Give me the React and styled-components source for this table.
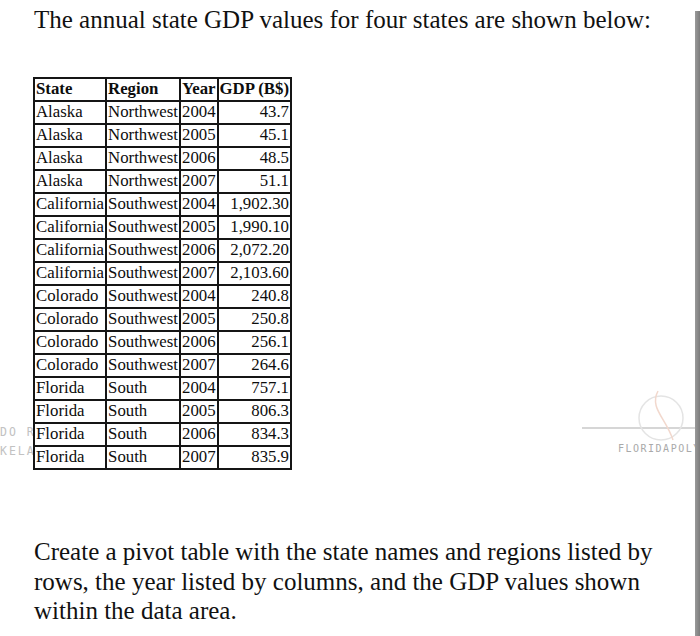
import React from 'react';
import styled, {createGlobalStyle} from 'styled-components';

const GlobalStyle = createGlobalStyle`
  html, body {
    margin: 0;
    padding: 0;
    background: #fff;
  }
  body {
    font-family: "Liberation Serif", "Times New Roman", serif;
    color: #111;
  }
`;

const Page = styled.div`
  position: relative;
  width: 700px;
  height: 636px;
  overflow: hidden;
  background: #fff;
  display: flex;
`;

const Sheet = styled.div`
  flex: 1;
  min-width: 0;
  box-sizing: border-box;
  padding: 5px 0 0 34px;
  display: flex;
  flex-direction: column;
  align-items: flex-start;
`;

const EdgeBar = styled.div`
  width: 5px;
  flex-shrink: 0;
  margin-top: 11px;
  background: linear-gradient(to right, #9a9a9a, #7c7c7c);
  position: relative;
  z-index: 2;
`;

const Heading = styled.p`
  margin: 0;
  font-size: 25px;
  line-height: 30px;
  white-space: nowrap;
`;

const TableWrap = styled.div`
  position: relative;
  z-index: 1;
  margin: 42px 0 0 -1px;
`;

const Table = styled.table`
  border-collapse: collapse;
  table-layout: fixed;
  background: #fff;
  font-family: "Liberation Serif", "Times New Roman", serif;
  font-size: 16.8px;
  line-height: 1;
  color: #0d0d0d;
`;

const Cell = styled.td`
  border: 2px solid #151515;
  height: 21px;
  padding: 0 1px;
  white-space: nowrap;
  overflow: hidden;
  text-align: ${p => (p.$num ? 'right' : 'left')};
  font-weight: ${p => (p.$head ? 700 : 400)};
  vertical-align: middle;
`;

const Prompt = styled.p`
  margin: 67px 0 0;
  width: 630px;
  font-size: 25px;
  line-height: 29.7px;
`;

const Watermark = styled.div`
  position: absolute;
  left: ${p => p.$x}px;
  top: ${p => p.$y}px;
  font-family: "DejaVu Sans Mono", "Liberation Mono", monospace;
  color: ${p => p.$color || '#c2c2c2'};
  font-size: ${p => p.$size || 11.5}px;
  letter-spacing: ${p => p.$spacing || 2}px;
  line-height: 1;
  white-space: nowrap;
`;

const Rule = styled.div`
  position: absolute;
  left: 582px;
  top: 427px;
  width: 118px;
  height: 2px;
  background: #d6d6d6;
`;

const Emblem = styled.svg`
  position: absolute;
  left: 636px;
  top: 388px;
`;

const cols = [71, 73, 36, 49];

const rows = [
  ['Alaska', 'Northwest', '2004', '43.7'],
  ['Alaska', 'Northwest', '2005', '45.1'],
  ['Alaska', 'Northwest', '2006', '48.5'],
  ['Alaska', 'Northwest', '2007', '51.1'],
  ['California', 'Southwest', '2004', '1,902.30'],
  ['California', 'Southwest', '2005', '1,990.10'],
  ['California', 'Southwest', '2006', '2,072.20'],
  ['California', 'Southwest', '2007', '2,103.60'],
  ['Colorado', 'Southwest', '2004', '240.8'],
  ['Colorado', 'Southwest', '2005', '250.8'],
  ['Colorado', 'Southwest', '2006', '256.1'],
  ['Colorado', 'Southwest', '2007', '264.6'],
  ['Florida', 'South', '2004', '757.1'],
  ['Florida', 'South', '2005', '806.3'],
  ['Florida', 'South', '2006', '834.3'],
  ['Florida', 'South', '2007', '835.9'],
];

export default function App() {
  return (
    <>
      <GlobalStyle />
      <Page>
        {/* faint watermark behind the screenshot */}
        <Watermark $x={0} $y={427}>DO R</Watermark>
        <Watermark $x={0} $y={446}>KELA</Watermark>
        <Rule />
        <Emblem width="60" height="60" viewBox="0 0 60 60">
          <circle cx="25" cy="30" r="22" fill="none" stroke="#e4e4e4" strokeWidth="1.5" />
          <path d="M22 3 C13 20 30 30 37 52" fill="none" stroke="#f2d8cd" strokeWidth="1.5" />
        </Emblem>
        <Watermark $x={618} $y={444} $size={10} $spacing={1.5} $color="#a9a9a9">FLORIDAPOLY</Watermark>

        <Sheet>
          <Heading>The annual state GDP values for four states are shown below:</Heading>

          <TableWrap>
            <Table>
              <colgroup>
                {cols.map((w, i) => <col key={i} style={{width: w}} />)}
              </colgroup>
              <tbody>
                <tr>
                  <Cell $head>State</Cell>
                  <Cell $head>Region</Cell>
                  <Cell $head>Year</Cell>
                  <Cell $head>GDP (B$)</Cell>
                </tr>
                {rows.map((r, i) => (
                  <tr key={i}>
                    <Cell>{r[0]}</Cell>
                    <Cell>{r[1]}</Cell>
                    <Cell>{r[2]}</Cell>
                    <Cell $num>{r[3]}</Cell>
                  </tr>
                ))}
              </tbody>
            </Table>
          </TableWrap>

          <Prompt>
            Create a pivot table with the state names and regions listed by rows, the year listed by columns, and the GDP values shown within the data area.
          </Prompt>
        </Sheet>

        <EdgeBar />
      </Page>
    </>
  );
}
